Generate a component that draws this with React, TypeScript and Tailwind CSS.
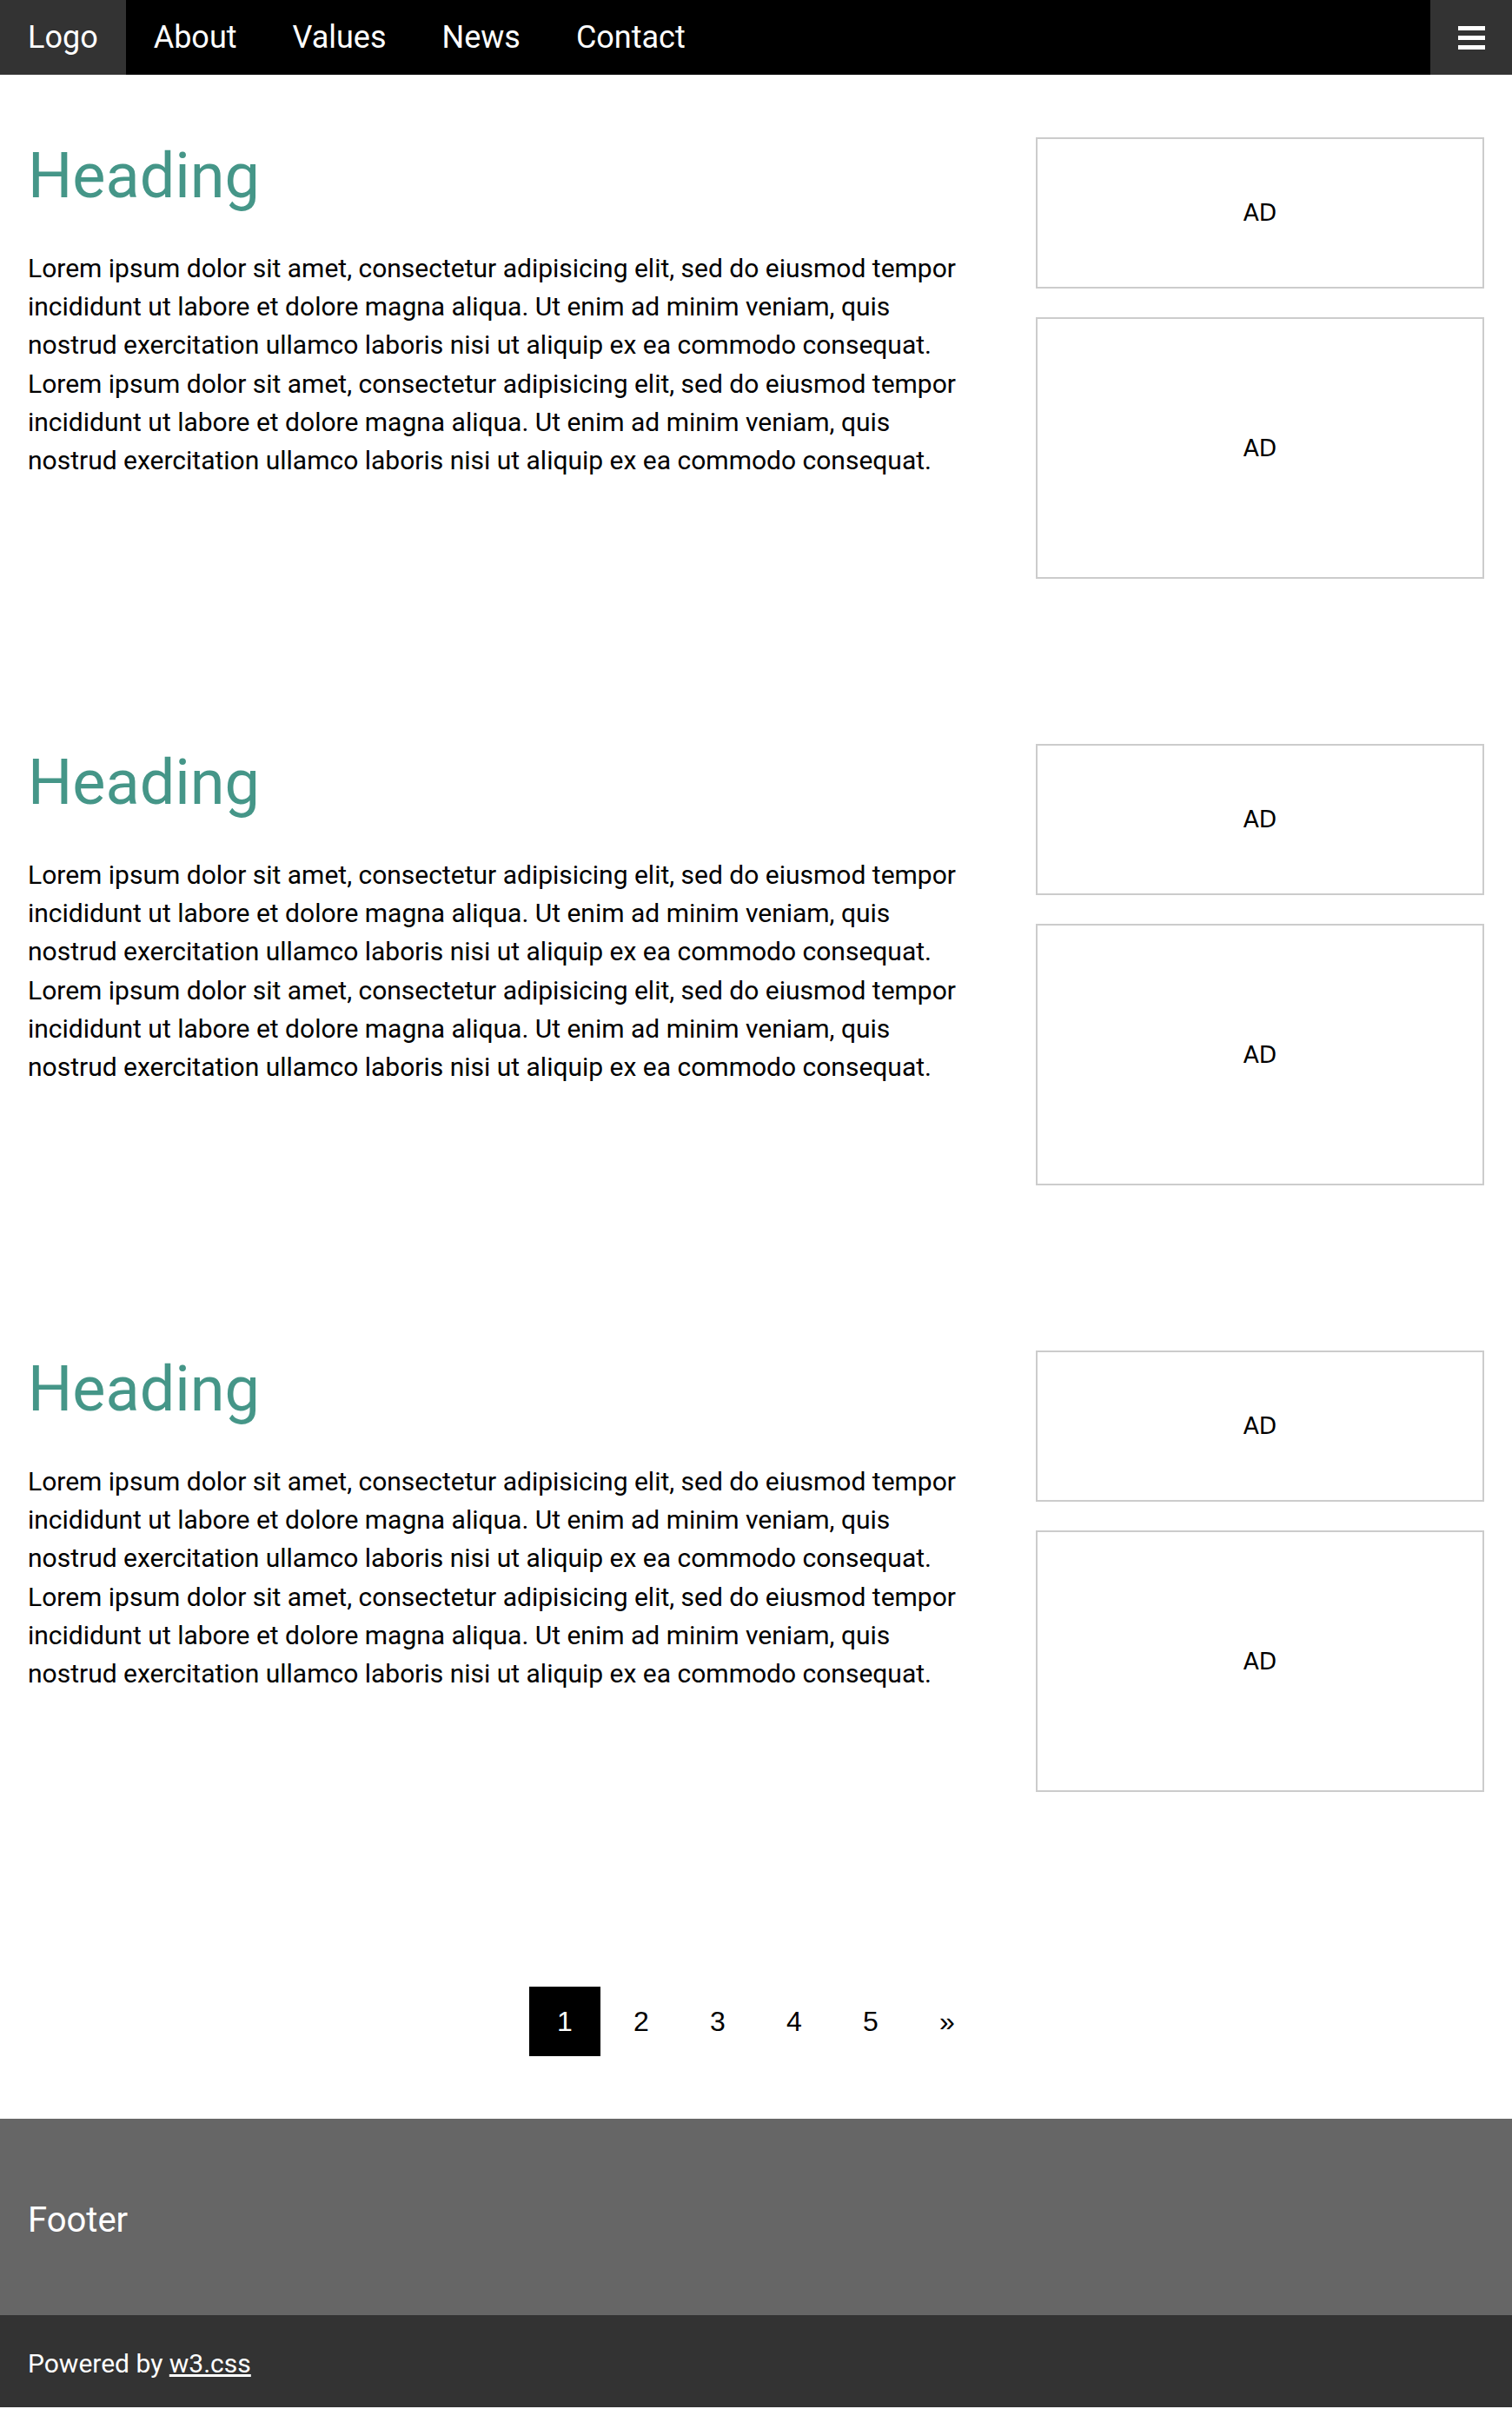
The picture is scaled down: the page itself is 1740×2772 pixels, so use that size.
const lorem =
  "Lorem ipsum dolor sit amet, consectetur adipisicing elit, sed do eiusmod tempor incididunt ut labore et dolore magna aliqua. Ut enim ad minim veniam, quis nostrud exercitation ullamco laboris nisi ut aliquip ex ea commodo consequat.";

const navLinks = ["About", "Values", "News", "Contact"];

export default function App() {
  return (
    <div className="min-h-screen bg-white font-['Roboto',sans-serif] text-black">
      <Navbar />

      {/* Articles + ads */}
      {[0, 1, 2].map((i) => (
        <Section key={i} />
      ))}

      <Pagination />

      {/* Footer */}
      <footer>
        <div className="flex h-[226px] items-center bg-[#666] px-8 pt-[8px]">
          <h4 className="text-[40px] leading-none text-white">Footer</h4>
        </div>
        <div className="flex h-[106px] items-center bg-[#333] px-8 pt-[4px] text-[30px] text-white">
          <p>
            Powered by{" "}
            <a href="#" className="underline">
              w3.css
            </a>
          </p>
        </div>
      </footer>
    </div>
  );
}

function Navbar() {
  return (
    <div className="flex h-[86px] items-stretch bg-black text-[36px] text-white">
      <a href="#" className="flex items-center bg-[#333] px-[32px]">
        Logo
      </a>
      {navLinks.map((link) => (
        <a key={link} href="#" className="flex items-center px-[32px]">
          {link}
        </a>
      ))}
      <button
        type="button"
        className="ml-auto flex w-[94px] flex-col items-center justify-center gap-[6px] bg-[#333]"
      >
        <span className="block h-[5px] w-[31px] bg-white" />
        <span className="block h-[5px] w-[31px] bg-white" />
        <span className="block h-[5px] w-[31px] bg-white" />
      </button>
    </div>
  );
}

function Section() {
  return (
    <div className="flex pt-[72px] pb-[118px]">
      <div className="w-2/3 px-8">
        <h1 className="text-[72px] leading-[89px] text-[#459688]">Heading</h1>
        <p className="mt-[40px] text-[30px] leading-[44.2px]">
          {lorem}
          <br />
          {lorem}
        </p>
      </div>
      <div className="flex w-1/3 flex-col gap-[33px] px-8 font-['DejaVu_Sans',sans-serif] text-[26.5px]">
        <div className="flex h-[174px] items-center justify-center border-2 border-[#ccc]">
          AD
        </div>
        <div className="flex h-[301px] items-center justify-center border-2 border-[#ccc]">
          AD
        </div>
      </div>
    </div>
  );
}

function Pagination() {
  const pages = ["1", "2", "3", "4", "5", "»"];
  return (
    <div className="flex justify-center gap-[6px] pt-[106px] pb-[72px] font-['Liberation_Sans',Arial,sans-serif] text-[32px]">
      {pages.map((p, i) => (
        <a
          key={p}
          href="#"
          className={
            i === 0
              ? "flex h-[80px] w-[82px] items-center justify-center bg-black text-white"
              : "flex h-[80px] w-[82px] items-center justify-center"
          }
        >
          {p}
        </a>
      ))}
    </div>
  );
}
